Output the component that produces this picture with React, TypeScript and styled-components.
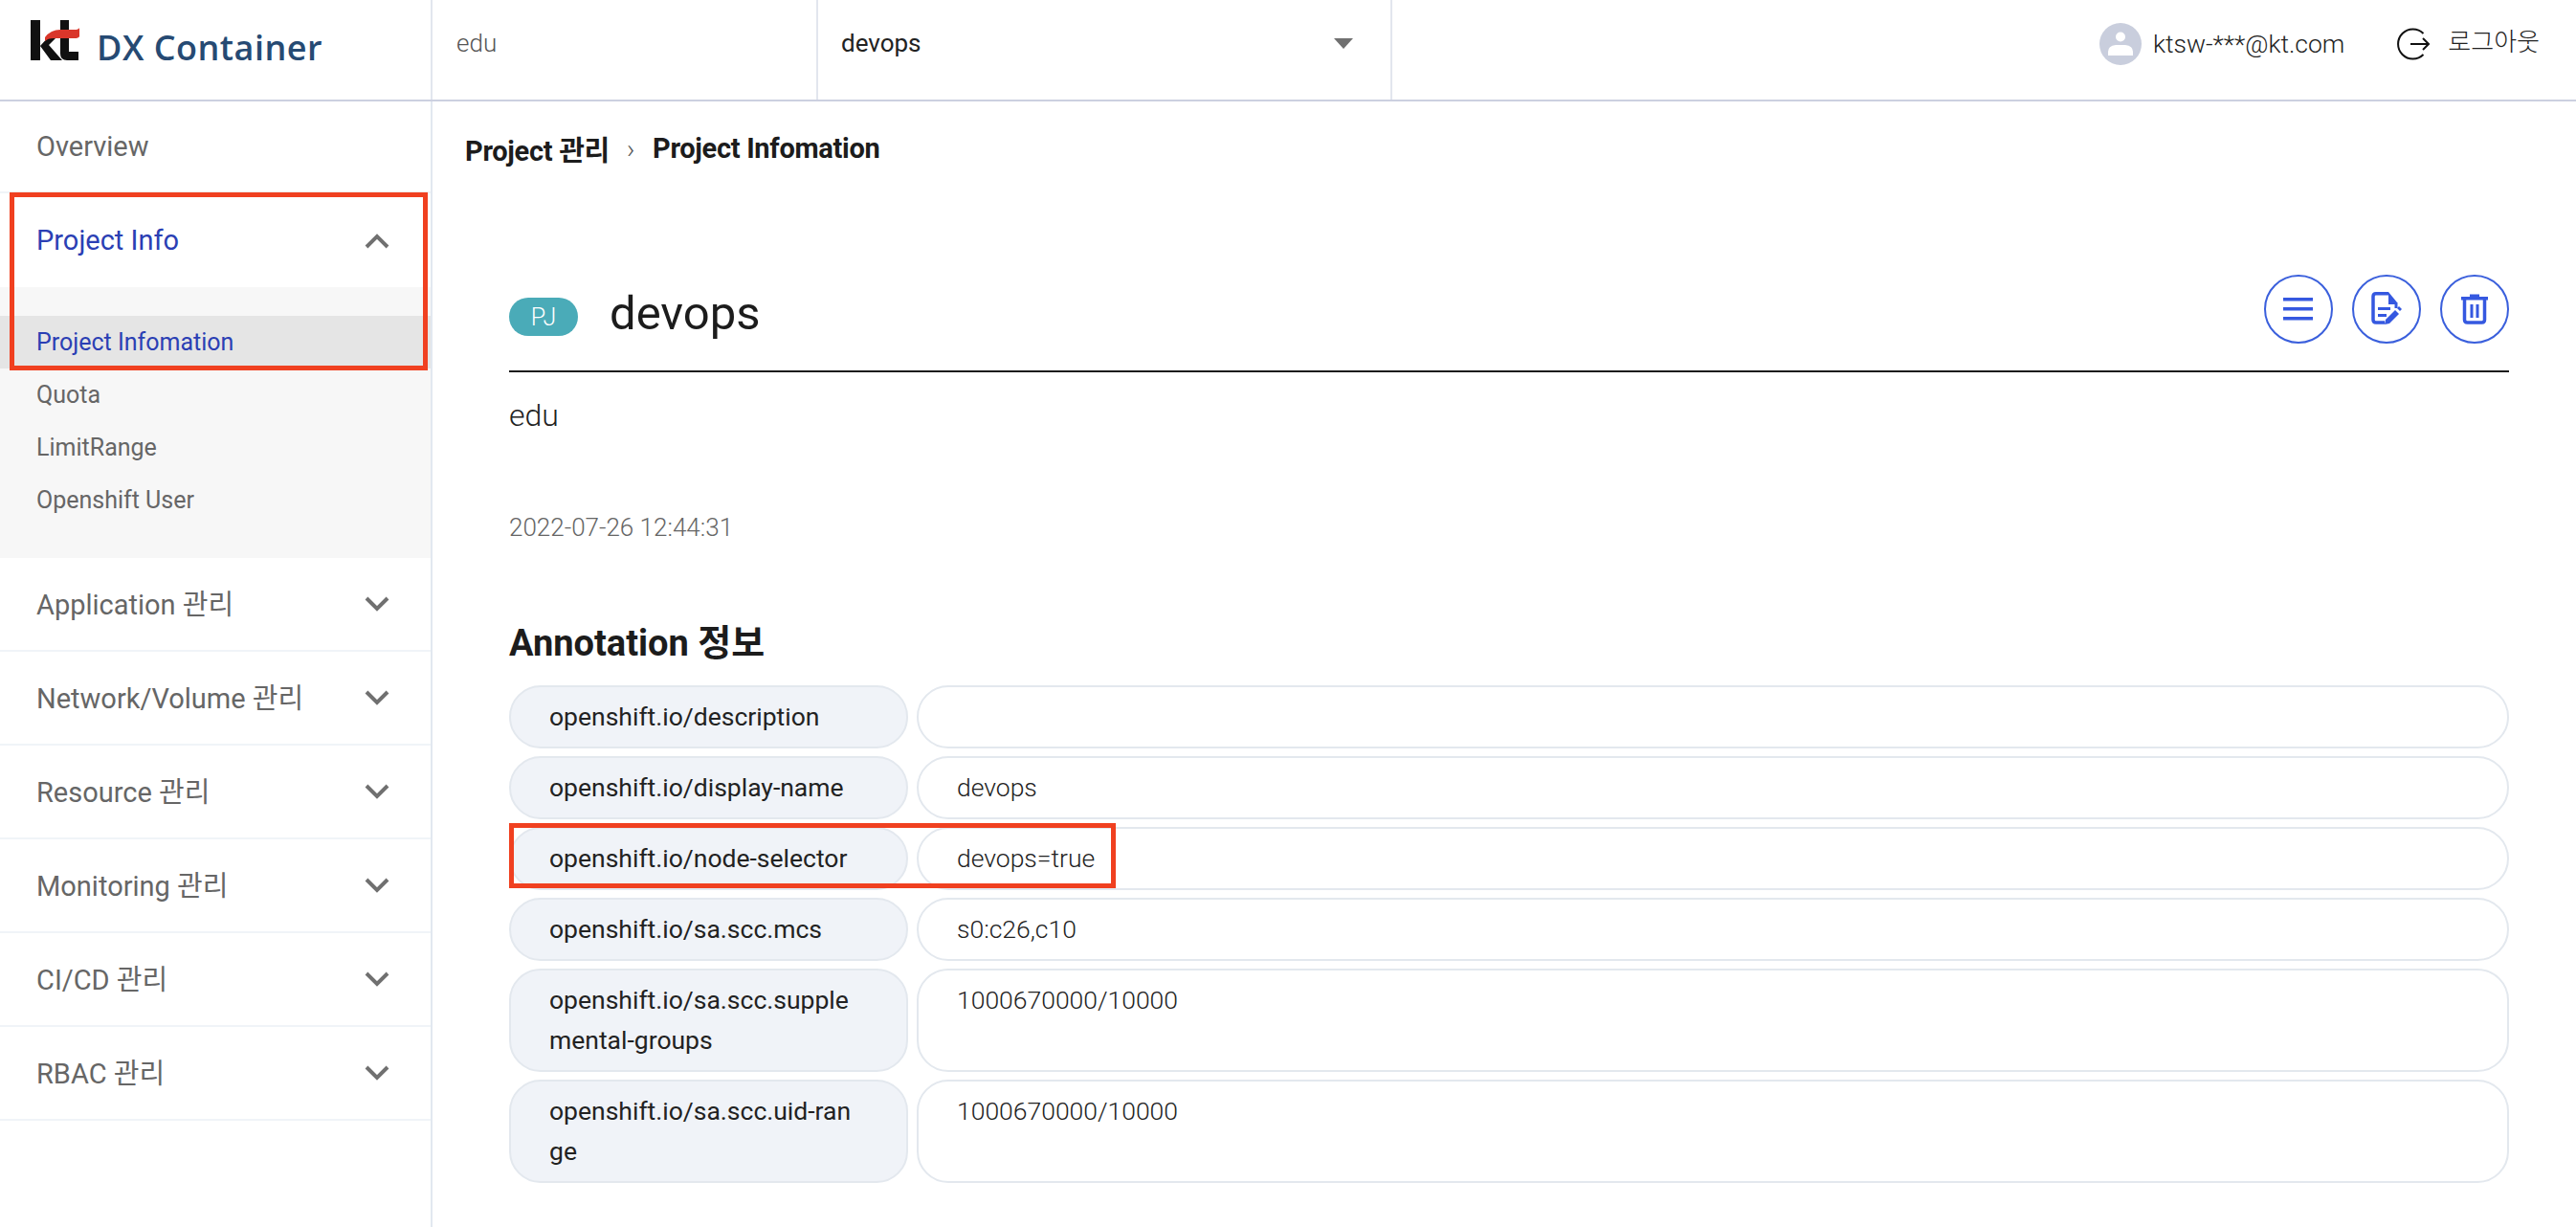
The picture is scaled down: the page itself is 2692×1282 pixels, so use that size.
import React from 'react';
import styled, { createGlobalStyle } from 'styled-components';

const Global = createGlobalStyle`
  html, body { margin: 0; padding: 0; background: #fff; }
  body { font-family: Roboto, "Noto Sans CJK KR", sans-serif; }
  * { box-sizing: border-box; }
`;

const Page = styled.div`
  position: relative;
  width: 2692px;
  height: 1282px;
  overflow: hidden;
  display: flex;
  flex-direction: column;
`;

const Header = styled.header`
  height: 106px;
  flex: none;
  display: flex;
  border-bottom: 2px solid #ccd0e0;
`;

const Brand = styled.div`
  width: 450px;
  display: flex;
  align-items: flex-start;
  gap: 18px;
  padding: 21px 0 0 32px;
`;

const BrandName = styled.span`
  font-family: "Open Sans", sans-serif;
  font-weight: 600;
  font-size: 36px;
  line-height: 50px;
  margin-top: 4px;
  letter-spacing: 0.5px;
  color: #264a73;
  white-space: nowrap;
`;

const HeaderCell = styled.div<{ $w: number }>`
  width: ${p => p.$w}px;
  height: 104px;
  border-left: 2px solid #e2e6ee;
  display: flex;
  align-items: flex-start;
  justify-content: space-between;
  padding: 27px 39px 0 25px;
  font-size: 26px;
  line-height: 36px;
  font-weight: 300;
  color: #555;
`;

const SelectCell = styled(HeaderCell)`
  padding-left: 24px;
  font-weight: 400;
  color: #222;
  border-right: 2px solid #e2e6ee;
`;

const Caret = styled.span`
  width: 0;
  height: 0;
  margin-top: 13px;
  border-left: 10px solid transparent;
  border-right: 10px solid transparent;
  border-top: 11px solid #707070;
`;

const UserArea = styled.div`
  flex: 1;
  display: flex;
  justify-content: flex-end;
  align-items: flex-start;
  padding: 24px 38px 0 0;
`;

const Avatar = styled.span`
  width: 44px;
  height: 44px;
  display: block;
  margin-right: 12px;
`;

const UserMail = styled.span`
  font-size: 26.5px;
  font-weight: 300;
  line-height: 44px;
  color: #222;
  margin-right: 52px;
`;

const LogoutIcon = styled.span`
  width: 38px;
  height: 38px;
  display: block;
  margin: 3px 18px 0 0;
`;

const LogoutText = styled.span`
  font-size: 26px;
  font-weight: 300;
  line-height: 40px;
  color: #222;
`;

const Body = styled.div`
  flex: 1;
  display: flex;
  min-height: 0;
`;

const Sidebar = styled.nav`
  width: 452px;
  flex: none;
  border-right: 2px solid #e2e8f0;
`;

const MenuRow = styled.div<{ $h?: number; $active?: boolean; $top?: boolean; $plain?: boolean }>`
  height: ${p => p.$h ?? 98}px;
  display: flex;
  align-items: center;
  justify-content: space-between;
  padding: 0 43px ${p => (p.$top ? 0 : 4)}px 38px;
  font-size: 29px;
  color: ${p => (p.$active ? '#2b3fb4' : '#666')};
  border-bottom: ${p => (p.$plain ? '0' : '2px solid #f0f4f8')};
  svg {
    margin-top: ${p => (p.$top ? 2 : 4)}px;
  }
`;

const SubMenu = styled.div`
  height: 283px;
  padding-top: 30px;
  background: #f7f7f7;
`;

const SubItem = styled.div<{ $active?: boolean }>`
  height: 55px;
  display: flex;
  align-items: center;
  padding-left: 38px;
  font-size: 25px;
  color: ${p => (p.$active ? '#2b3fb4' : '#666')};
  background: ${p => (p.$active ? '#e5e5e5' : 'transparent')};
`;

const Main = styled.main`
  flex: 1;
  min-width: 0;
  padding: 29px 70px 0 34px;
`;

const Crumbs = styled.div`
  display: flex;
  align-items: center;
  height: 40px;
  font-size: 29px;
  font-weight: 700;
  letter-spacing: -0.3px;
  color: #1c1c1c;
`;

const CrumbSep = styled.span`
  font-weight: 300;
  font-size: 28px;
  color: #555;
  margin: 0 19px 0 18px;
`;

const Content = styled.section`
  padding: 0 0 0 46px;
`;

const TitleRow = styled.div`
  margin-top: 95px;
  height: 119px;
  display: flex;
  align-items: center;
  padding-bottom: 11px;
  border-bottom: 2px solid #1c1c1c;
`;

const Badge = styled.span`
  width: 72px;
  height: 40px;
  margin-top: 16px;
  border-radius: 20px;
  background: #4aabb8;
  color: #fff;
  font-size: 25px;
  font-weight: 300;
  display: flex;
  align-items: center;
  justify-content: center;
`;

const Title = styled.h1`
  margin: 9px 0 0 33px;
  font-size: 49px;
  font-weight: 400;
  color: #1c1c1c;
  flex: 1;
`;

const IconButtons = styled.div`
  display: flex;
  gap: 20px;
`;

const IconButton = styled.span`
  width: 72px;
  height: 72px;
  border-radius: 50%;
  border: 2px solid #3a5fdc;
  display: flex;
  align-items: center;
  justify-content: center;
`;

const Desc = styled.p`
  margin: 25px 0 0;
  font-size: 32px;
  line-height: 40px;
  font-weight: 300;
  color: #222;
`;

const DateText = styled.p`
  margin: 77px 0 0;
  font-size: 26px;
  line-height: 40px;
  font-weight: 300;
  color: #666;
`;

const SectionTitle = styled.h2`
  margin: 81px 0 0;
  font-size: 38px;
  line-height: 40px;
  font-weight: 700;
  color: #1c1c1c;
`;

const Rows = styled.div`
  margin-top: 24px;
  display: flex;
  flex-direction: column;
  gap: 8px;
`;

const Row = styled.div`
  display: flex;
  gap: 9px;
`;

const KeyCell = styled.div`
  width: 417px;
  flex: none;
  min-height: 66px;
  padding: 10px 48px 10px 40px;
  border: 2px solid #e3e8ee;
  border-radius: 33px;
  background: #f0f3f8;
  font-size: 26.5px;
  line-height: 42px;
  color: #222;
  word-break: break-all;
`;

const ValueCell = styled.div`
  flex: 1;
  min-height: 66px;
  padding: 10px 40px;
  border: 2px solid #e3e8ee;
  border-radius: 33px;
  background: #fff;
  font-size: 26.5px;
  line-height: 42px;
  font-weight: 300;
  color: #222;
`;

const Highlight = styled.div<{ $x: number; $y: number; $w: number; $h: number }>`
  position: absolute;
  left: ${p => p.$x}px;
  top: ${p => p.$y}px;
  width: ${p => p.$w}px;
  height: ${p => p.$h}px;
  border: 5px solid #f04020;
  pointer-events: none;
`;

const KtLogo = () => (
  <svg width="51" height="42" viewBox="0 0 51 42">
    <rect x="0" y="0" width="10" height="42" fill="#111" />
    <path d="M10 27 L21 15 L30 15 L19 26 L33 42 L21 42 Z" fill="#111" />
    <path d="M31 0 H40 V33 H50 V42 H38 Q31 42 31 35 Z" fill="#111" />
    <path d="M15 18 Q21 10 31 10 H46 Q50 10 51 8 L51 17 Q50 19 46 19 H24 Q18 19 15 22 Z" fill="#d9362a" />
  </svg>
);

const Chevron = ({ up }: { up?: boolean }) => (
  <svg width="26" height="16" viewBox="0 0 26 16">
    <path d={up ? 'M2 14 L13 3 L24 14' : 'M2 2 L13 13 L24 2'} fill="none" stroke="#707070" strokeWidth="4" />
  </svg>
);

const MenuIcon = () => (
  <svg width="32" height="24" viewBox="0 0 32 24" fill="#3558e0">
    <rect x="0" y="0" width="31" height="3.5" />
    <rect x="0" y="10" width="31" height="3.5" />
    <rect x="0" y="20" width="31" height="3.5" />
  </svg>
);

const DocIcon = () => (
  <svg width="32" height="36" viewBox="0 0 32 36">
    <path d="M18 1.75 H5 Q2 1.75 2 4.75 V29 Q2 32 5 32 H14" fill="none" stroke="#3558e0" strokeWidth="3.5" />
    <path d="M18 0 L27 11 V13 H18 Z" fill="#3558e0" />
    <path d="M26 11 V17" stroke="#3558e0" strokeWidth="3" />
    <rect x="7" y="16" width="13" height="3" fill="#3558e0" />
    <rect x="7" y="23" width="9" height="3" fill="#3558e0" />
    <path d="M14 34 L15 29 L25 19 L29 23 L19 33 Z" fill="#3558e0" />
    <path d="M27 17 L29 15 L32 18 L30 20 Z" fill="#3558e0" />
  </svg>
);

const TrashIcon = () => (
  <svg width="28" height="32" viewBox="0 0 28 32">
    <rect x="0" y="3" width="28" height="3.5" fill="#3558e0" />
    <rect x="9" y="0.5" width="10" height="3" fill="#3558e0" />
    <path d="M3.5 6 V27 Q3.5 30 6.5 30 H21.5 Q24.5 30 24.5 27 V6" fill="none" stroke="#3558e0" strokeWidth="3.5" />
    <rect x="9.5" y="11" width="3" height="14" fill="#3558e0" />
    <rect x="15.5" y="11" width="3" height="14" fill="#3558e0" />
  </svg>
);

const AvatarIcon = () => (
  <svg width="44" height="44" viewBox="0 0 44 44">
    <circle cx="22" cy="22" r="22" fill="#c9cedd" />
    <circle cx="22" cy="14.5" r="5" fill="#fff" />
    <path d="M9 34 V30 Q9 24 17 23 H27 Q35 24 35 30 V34 Z" fill="#fff" />
  </svg>
);

const ExitIcon = () => (
  <svg width="38" height="38" viewBox="0 0 38 38">
    <path d="M30.5 8 A15.5 15.5 0 1 0 30.5 30" fill="none" stroke="#111" strokeWidth="2" />
    <path d="M17 19 H36 M30 13 L36 19 L30 25" fill="none" stroke="#111" strokeWidth="2" />
  </svg>
);

const menus = ['Application 관리', 'Network/Volume 관리', 'Resource 관리', 'Monitoring 관리', 'CI/CD 관리', 'RBAC 관리'];
const subs = ['Project Infomation', 'Quota', 'LimitRange', 'Openshift User'];
const annotations: [string, string][] = [
  ['openshift.io/description', ''],
  ['openshift.io/display-name', 'devops'],
  ['openshift.io/node-selector', 'devops=true'],
  ['openshift.io/sa.scc.mcs', 's0:c26,c10'],
  ['openshift.io/sa.scc.supplemental-groups', '1000670000/10000'],
  ['openshift.io/sa.scc.uid-range', '1000670000/10000'],
];

export default function App() {
  return (
    <Page>
      <Global />
      <Header>
        <Brand>
          <KtLogo />
          <BrandName>DX Container</BrandName>
        </Brand>
        <HeaderCell $w={403}>edu</HeaderCell>
        <SelectCell $w={602}>
          devops
          <Caret />
        </SelectCell>
        <UserArea>
          <Avatar><AvatarIcon /></Avatar>
          <UserMail>ktsw-***@kt.com</UserMail>
          <LogoutIcon><ExitIcon /></LogoutIcon>
          <LogoutText>로그아웃</LogoutText>
        </UserArea>
      </Header>
      <Body>
        <Sidebar>
          <MenuRow $h={96} $top>Overview</MenuRow>
          <MenuRow $active $plain $top>
            Project Info
            <Chevron up />
          </MenuRow>
          <SubMenu>
            {subs.map((s, i) => (
              <SubItem key={s} $active={i === 0}>{s}</SubItem>
            ))}
          </SubMenu>
          {menus.map(m => (
            <MenuRow key={m}>
              {m}
              <Chevron />
            </MenuRow>
          ))}
        </Sidebar>
        <Main>
          <Crumbs>
            Project 관리
            <CrumbSep>›</CrumbSep>
            Project Infomation
          </Crumbs>
          <Content>
            <TitleRow>
              <Badge>PJ</Badge>
              <Title>devops</Title>
              <IconButtons>
                <IconButton><MenuIcon /></IconButton>
                <IconButton><DocIcon /></IconButton>
                <IconButton><TrashIcon /></IconButton>
              </IconButtons>
            </TitleRow>
            <Desc>edu</Desc>
            <DateText>2022-07-26 12:44:31</DateText>
            <SectionTitle>Annotation 정보</SectionTitle>
            <Rows>
              {annotations.map(([k, v]) => (
                <Row key={k}>
                  <KeyCell>{k}</KeyCell>
                  <ValueCell>{v}</ValueCell>
                </Row>
              ))}
            </Rows>
          </Content>
        </Main>
      </Body>
      <Highlight $x={10} $y={201} $w={437} $h={186} />
      <Highlight $x={532} $y={860} $w={634} $h={68} />
    </Page>
  );
}
